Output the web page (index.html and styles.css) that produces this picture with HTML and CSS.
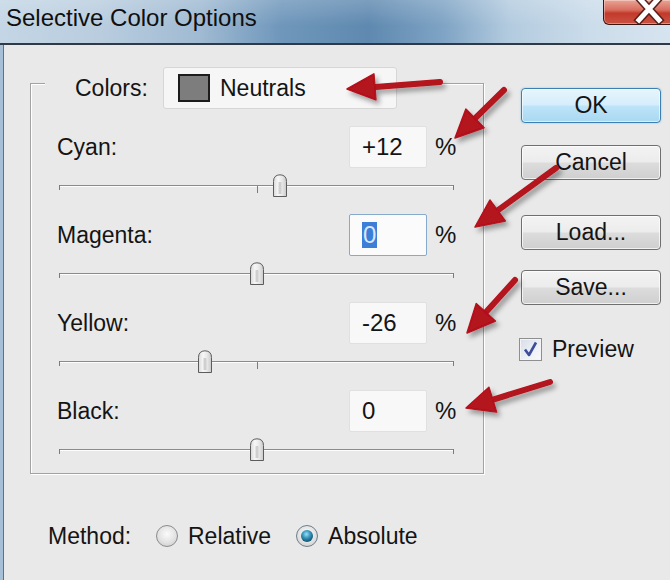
FILE: index.html
```html
<!DOCTYPE html>
<html>
<head>
<meta charset="utf-8">
<title>Selective Color Options</title>
<link rel="stylesheet" href="styles.css">
</head>
<body>
<svg class="defs" width="0" height="0" aria-hidden="true">
  <defs>
    <linearGradient id="thumbFill" x1="0" y1="0" x2="1" y2="0">
      <stop offset="0" stop-color="#d9d9d9"/>
      <stop offset="0.35" stop-color="#f7f7f7"/>
      <stop offset="0.65" stop-color="#e9e9e9"/>
      <stop offset="1" stop-color="#c9c9c9"/>
    </linearGradient>
    <symbol id="thumb" viewBox="0 0 16 23">
      <path d="M1.5 22.5 V7.5 Q1.5 1 8 0.8 Q14.5 1 14.5 7.5 V22.5 Z" fill="url(#thumbFill)" stroke="#5c5c5c" stroke-width="1"/>
      <rect x="6.5" y="8" width="3" height="12" fill="#cfcfcf"/>
    </symbol>
  </defs>
</svg>
<div class="window">
  <div class="titlebar">
    <span class="title">Selective Color Options</span>
    <div class="close">
      <svg class="close-x" width="34" height="24" viewBox="0 0 34 24">
        <path d="M6 -2 L26 20 M26 -2 L6 20" stroke="#5a2018" stroke-width="8" stroke-linecap="square"/>
        <path d="M6 -2 L26 20 M26 -2 L6 20" stroke="#ffffff" stroke-width="5" stroke-linecap="square"/>
      </svg>
    </div>
  </div>
  <div class="titleline"></div>
  <div class="body">
    <div class="left">
      <div class="group">
        <div class="group-head">
          <span class="head-label">Colors:</span>
          <div class="select"><span class="swatch"></span><span>Neutrals</span></div>
        </div>

        <div class="row"><span class="row-label">Cyan:</span><div class="field">+12</div><span class="pct">%</span></div>
        <div class="slider"><div class="track"></div><span class="tick"></span><svg class="thumb" style="left:213px"><use href="#thumb"/></svg></div>

        <div class="row"><span class="row-label">Magenta:</span><div class="field focus"><span class="sel">0</span></div><span class="pct">%</span></div>
        <div class="slider"><div class="track"></div><span class="tick"></span><svg class="thumb" style="left:190px"><use href="#thumb"/></svg></div>

        <div class="row"><span class="row-label">Yellow:</span><div class="field">-26</div><span class="pct">%</span></div>
        <div class="slider"><div class="track"></div><span class="tick"></span><svg class="thumb" style="left:138px"><use href="#thumb"/></svg></div>

        <div class="row"><span class="row-label">Black:</span><div class="field">0</div><span class="pct">%</span></div>
        <div class="slider last"><div class="track"></div><span class="tick"></span><svg class="thumb" style="left:190px"><use href="#thumb"/></svg></div>
      </div>

      <div class="method">
        <span class="method-label">Method:</span>
        <span class="radio"></span><span class="radio-text">Relative</span>
        <span class="radio checked"></span><span class="radio-text">Absolute</span>
      </div>
    </div>

    <div class="right">
      <div class="btn ok">OK</div>
      <div class="btn cancel">Cancel</div>
      <div class="btn load">Load...</div>
      <div class="btn save">Save...</div>
      <div class="preview">
        <span class="checkbox">
          <svg width="21" height="21" viewBox="0 0 21 21"><path d="M5 10.5 L9 16 L16 3.5" fill="none" stroke="#3d4f9c" stroke-width="2.6" stroke-linejoin="round"/></svg>
        </span>
        <span class="preview-text">Preview</span>
      </div>
    </div>
  </div>

  <svg class="arrows" width="670" height="580" viewBox="0 0 670 580">
    <defs>
      <filter id="sh" x="-30%" y="-30%" width="160%" height="160%">
        <feDropShadow dx="3" dy="4" stdDeviation="2.5" flood-color="#000" flood-opacity="0.35"/>
      </filter>
    </defs>
    <g filter="url(#sh)" fill="#b3121b" stroke="#b3121b">
      <line x1="440" y1="82" x2="372" y2="87.2" stroke-width="6" stroke-linecap="round"/>
      <polygon points="347,89 373.9,73.9 375.9,99.9" stroke-width="1.5" stroke-linejoin="round"/>

      <line x1="504" y1="90" x2="473" y2="120.4" stroke-width="6" stroke-linecap="round"/>
      <polygon points="455,138 465.9,109.1 484.1,127.7" stroke-width="1.5" stroke-linejoin="round"/>

      <line x1="556" y1="168" x2="496" y2="211.7" stroke-width="6" stroke-linecap="round"/>
      <polygon points="475,227 489.9,200 505.3,221" stroke-width="1.5" stroke-linejoin="round"/>

      <line x1="515" y1="280" x2="484.5" y2="313.8" stroke-width="6" stroke-linecap="round"/>
      <polygon points="467,333 476.2,303.6 495.4,321" stroke-width="1.5" stroke-linejoin="round"/>

      <line x1="550" y1="382" x2="490.8" y2="400.3" stroke-width="6" stroke-linecap="round"/>
      <polygon points="466,408 488.9,387.3 496.6,412.1" stroke-width="1.5" stroke-linejoin="round"/>
    </g>
  </svg>
</div>
</body>
</html>
```

FILE: styles.css
```css
* { box-sizing: border-box; }
html, body { margin: 0; padding: 0; }
body { background: #e9e9e9; }

.defs { position: absolute; width: 0; height: 0; overflow: hidden; }

.window {
  width: 670px;
  height: 580px;
  position: relative;
  overflow: hidden;
  font-family: "Liberation Sans", Arial, sans-serif;
  color: #141414;
  background: #e9e9e9;
}

/* ---------- title bar ---------- */
.titlebar {
  height: 43px;
  display: flex;
  align-items: flex-start;
  background:
    linear-gradient(180deg, rgba(255,255,255,0.18) 0%, rgba(255,255,255,0) 60%),
    linear-gradient(90deg, #c4d6e5 0%, #b9cddf 15%, #9fbad2 30%, #6f97bb 42%, #5f89b0 55%, #7ea3c4 66%, #b3cbdf 76%, #cbdcea 88%, #d6e4ef 100%);
}
.title {
  font-size: 24px;
  line-height: 24px;
  margin: 6px 0 0 6px;
  color: #0f0f0f;
}
.close {
  margin-left: auto;
  margin-right: -4px;
  width: 71px;
  height: 25px;
  border: 1px solid #3d1510;
  border-top: none;
  border-radius: 0 0 0 6px;
  background: linear-gradient(180deg, #e9a596 0%, #d86c5e 42%, #c23a2b 55%, #cb5242 100%);
  box-shadow: inset 0 0 0 1px rgba(255,255,255,0.35);
  overflow: hidden;
  padding-left: 29px;
}
.close-x { display: block; }
.titleline {
  height: 2px;
  background: #2f3a46;
}

/* ---------- body ---------- */
.body {
  display: flex;
  height: 535px;
  border-left: 3px solid #a6c1d7;
  box-shadow: inset 1px 0 0 #5a728a;
}
.left {
  margin-left: 27px;
  width: 454px;
  padding-top: 38px;
}

/* ---------- group frame ---------- */
.group {
  border: 1px solid #a2a2a2;
  box-shadow: 1px 1px 0 #ffffff, inset 1px 1px 0 #ffffff;
}
.group-head {
  display: flex;
  align-items: center;
  height: 42px;
  width: fit-content;
  margin: -17px 0 17px 14px;
  padding-left: 30px;
  background: #e9e9e9;
}
.head-label {
  width: 88px;
  font-size: 23px;
}
.select {
  width: 234px;
  height: 42px;
  display: flex;
  align-items: center;
  padding-left: 14px;
  background: #f6f6f6;
  border: 1px solid #d6d6d6;
  border-radius: 3px;
  font-size: 23px;
}
.swatch {
  width: 32px;
  height: 28px;
  margin-right: 10px;
  background: #7d7d7d;
  border: 2px solid #1c1c1c;
}

.row {
  display: flex;
  align-items: center;
  height: 42px;
}
.row-label {
  width: 318px;
  padding-left: 26px;
  font-size: 23px;
}
.field {
  width: 78px;
  height: 42px;
  display: flex;
  align-items: center;
  padding-left: 12px;
  background: #f8f8f8;
  border: 1px solid #e0e0e0;
  border-radius: 2px;
  font-size: 24px;
}
.field.focus {
  border-color: #86aacd;
  background: #fbfbfb;
}
.sel {
  background: #3b7fd6;
  color: #d9e7ff;
  line-height: 26px;
  padding: 0 1px;
}
.pct {
  margin-left: 8px;
  font-size: 24px;
}

/* ---------- sliders ---------- */
.slider {
  position: relative;
  height: 46px;
  margin: 0 29px 0 28px;
  padding-top: 17px;
}
.slider.last { height: 41px; }
.track {
  height: 2px;
  border-top: 1px solid #8b8b8b;
  background: #fdfdfd;
}
.slider::before,
.slider::after {
  content: "";
  position: absolute;
  top: 17px;
  width: 1px;
  height: 5px;
  background: #7c7c7c;
}
.slider::before { left: 0; }
.slider::after { right: 0; }
.tick {
  position: absolute;
  left: 198px;
  top: 18px;
  width: 1px;
  height: 7px;
  background: #7c7c7c;
}
.thumb {
  position: absolute;
  top: 6px;
  width: 16px;
  height: 23px;
}

/* ---------- method ---------- */
.method {
  display: flex;
  align-items: center;
  height: 30px;
  margin: 47px 0 0 18px;
  font-size: 23px;
}
.method-label { width: 108px; }
.radio {
  width: 22px;
  height: 22px;
  border-radius: 50%;
  border: 1px solid #8c8c8c;
  background: radial-gradient(circle at 50% 40%, #fbfbfb 0%, #e2e2e2 55%, #c6c6c6 100%);
  margin-right: 10px;
  position: relative;
}
.radio.checked {
  margin-left: 25px;
  border-color: #6d7f8c;
}
.radio.checked::after {
  content: "";
  position: absolute;
  left: 4px;
  top: 4px;
  width: 12px;
  height: 12px;
  border-radius: 50%;
  background: radial-gradient(circle at 45% 35%, #9be0f5 0%, #3a9cc2 35%, #12506e 75%, #0b3448 100%);
}

/* ---------- right column ---------- */
.right {
  margin-left: 37px;
  padding-top: 43px;
  width: 140px;
  display: flex;
  flex-direction: column;
}
.btn {
  width: 140px;
  height: 35px;
  display: flex;
  align-items: center;
  justify-content: center;
  font-size: 23px;
  border: 1px solid #6f6f6f;
  border-radius: 4px;
  background: linear-gradient(180deg, #f3f3f3 0%, #ececec 48%, #dcdcdc 52%, #cfcfcf 100%);
  box-shadow: inset 0 0 0 1px rgba(255,255,255,0.7);
}
.btn.ok {
  border-color: #3c7fb1;
  background: linear-gradient(180deg, #e6f5fc 0%, #d6eefb 48%, #bde4f8 52%, #a9d8f2 100%);
  box-shadow: inset 0 0 0 1px rgba(255,255,255,0.6), 0 0 2px #7fc0e8;
}
.btn.cancel { margin-top: 22px; }
.btn.load { margin-top: 35px; }
.btn.save { margin-top: 20px; }

.preview {
  display: flex;
  align-items: center;
  height: 25px;
  margin: 32px 0 0 -2px;
  font-size: 23px;
}
.checkbox {
  width: 23px;
  height: 23px;
  border: 1px solid #8e8f8f;
  background: linear-gradient(135deg, #d7dde8 0%, #eef1f6 60%, #f8f9fb 100%);
  box-shadow: inset 0 0 0 1px #f4f4f4;
  margin-right: 10px;
}
.checkbox svg { display: block; }

/* ---------- annotation arrows ---------- */
.arrows {
  position: absolute;
  left: 0;
  top: 0;
  pointer-events: none;
}
```
